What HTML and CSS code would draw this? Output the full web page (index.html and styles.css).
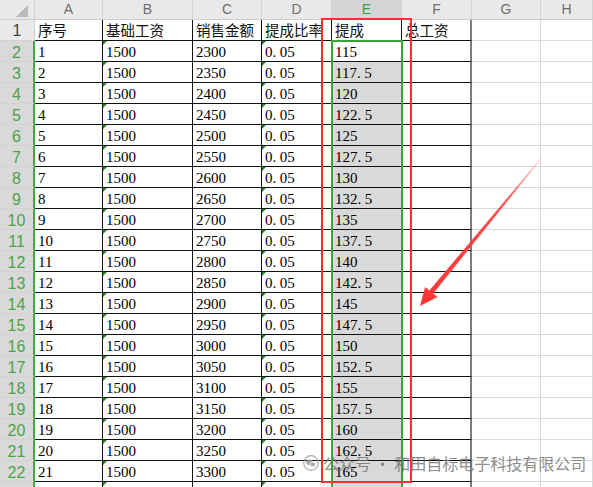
FILE: index.html
```html
<!DOCTYPE html>
<html lang="zh">
<head>
<meta charset="utf-8">
<title>提成表</title>
<link rel="stylesheet" href="styles.css">
</head>
<body>
<div class="wrap">
  <div class="sheet">
    <div class="corner"><span class="tri"></span></div>
    <div class="ch">A</div><div class="ch">B</div><div class="ch">C</div><div class="ch">D</div><div class="ch sel">E</div><div class="ch">F</div><div class="ch">G</div><div class="ch">H</div>

    <div class="rh">1</div><div class="c hd">序号</div><div class="c hd">基础工资</div><div class="c hd">销售金额</div><div class="c hd">提成比率</div><div class="c hd">提成</div><div class="c hd f">总工资</div><div class="g"></div><div class="g"></div>

    <div class="rh sel">2</div><div class="c">1</div><div class="c t">1500</div><div class="c">2300</div><div class="c t">0<span class="p">.</span>05</div><div class="c e act">115</div><div class="c f"></div><div class="g"></div><div class="g"></div>
    <div class="rh sel">3</div><div class="c">2</div><div class="c t">1500</div><div class="c">2350</div><div class="c t">0<span class="p">.</span>05</div><div class="c e">117<span class="p">.</span>5</div><div class="c f"></div><div class="g"></div><div class="g"></div>
    <div class="rh sel">4</div><div class="c">3</div><div class="c t">1500</div><div class="c">2400</div><div class="c t">0<span class="p">.</span>05</div><div class="c e">120</div><div class="c f"></div><div class="g"></div><div class="g"></div>
    <div class="rh sel">5</div><div class="c">4</div><div class="c t">1500</div><div class="c">2450</div><div class="c t">0<span class="p">.</span>05</div><div class="c e">122<span class="p">.</span>5</div><div class="c f"></div><div class="g"></div><div class="g"></div>
    <div class="rh sel">6</div><div class="c">5</div><div class="c t">1500</div><div class="c">2500</div><div class="c t">0<span class="p">.</span>05</div><div class="c e">125</div><div class="c f"></div><div class="g"></div><div class="g"></div>
    <div class="rh sel">7</div><div class="c">6</div><div class="c t">1500</div><div class="c">2550</div><div class="c t">0<span class="p">.</span>05</div><div class="c e">127<span class="p">.</span>5</div><div class="c f"></div><div class="g"></div><div class="g"></div>
    <div class="rh sel">8</div><div class="c">7</div><div class="c t">1500</div><div class="c">2600</div><div class="c t">0<span class="p">.</span>05</div><div class="c e">130</div><div class="c f"></div><div class="g"></div><div class="g"></div>
    <div class="rh sel">9</div><div class="c">8</div><div class="c t">1500</div><div class="c">2650</div><div class="c t">0<span class="p">.</span>05</div><div class="c e">132<span class="p">.</span>5</div><div class="c f"></div><div class="g"></div><div class="g"></div>
    <div class="rh sel">10</div><div class="c">9</div><div class="c t">1500</div><div class="c">2700</div><div class="c t">0<span class="p">.</span>05</div><div class="c e">135</div><div class="c f"></div><div class="g"></div><div class="g"></div>
    <div class="rh sel">11</div><div class="c">10</div><div class="c t">1500</div><div class="c">2750</div><div class="c t">0<span class="p">.</span>05</div><div class="c e">137<span class="p">.</span>5</div><div class="c f"></div><div class="g"></div><div class="g"></div>
    <div class="rh sel">12</div><div class="c">11</div><div class="c t">1500</div><div class="c">2800</div><div class="c t">0<span class="p">.</span>05</div><div class="c e">140</div><div class="c f"></div><div class="g"></div><div class="g"></div>
    <div class="rh sel">13</div><div class="c">12</div><div class="c t">1500</div><div class="c">2850</div><div class="c t">0<span class="p">.</span>05</div><div class="c e">142<span class="p">.</span>5</div><div class="c f"></div><div class="g"></div><div class="g"></div>
    <div class="rh sel">14</div><div class="c">13</div><div class="c t">1500</div><div class="c">2900</div><div class="c t">0<span class="p">.</span>05</div><div class="c e">145</div><div class="c f"></div><div class="g"></div><div class="g"></div>
    <div class="rh sel">15</div><div class="c">14</div><div class="c t">1500</div><div class="c">2950</div><div class="c t">0<span class="p">.</span>05</div><div class="c e">147<span class="p">.</span>5</div><div class="c f"></div><div class="g"></div><div class="g"></div>
    <div class="rh sel">16</div><div class="c">15</div><div class="c t">1500</div><div class="c">3000</div><div class="c t">0<span class="p">.</span>05</div><div class="c e">150</div><div class="c f"></div><div class="g"></div><div class="g"></div>
    <div class="rh sel">17</div><div class="c">16</div><div class="c t">1500</div><div class="c">3050</div><div class="c t">0<span class="p">.</span>05</div><div class="c e">152<span class="p">.</span>5</div><div class="c f"></div><div class="g"></div><div class="g"></div>
    <div class="rh sel">18</div><div class="c">17</div><div class="c t">1500</div><div class="c">3100</div><div class="c t">0<span class="p">.</span>05</div><div class="c e">155</div><div class="c f"></div><div class="g"></div><div class="g"></div>
    <div class="rh sel">19</div><div class="c">18</div><div class="c t">1500</div><div class="c">3150</div><div class="c t">0<span class="p">.</span>05</div><div class="c e">157<span class="p">.</span>5</div><div class="c f"></div><div class="g"></div><div class="g"></div>
    <div class="rh sel">20</div><div class="c">19</div><div class="c t">1500</div><div class="c">3200</div><div class="c t">0<span class="p">.</span>05</div><div class="c e">160</div><div class="c f"></div><div class="g"></div><div class="g"></div>
    <div class="rh sel">21</div><div class="c">20</div><div class="c t">1500</div><div class="c">3250</div><div class="c t">0<span class="p">.</span>05</div><div class="c e">162<span class="p">.</span>5</div><div class="c f"></div><div class="g"></div><div class="g"></div>
    <div class="rh sel">22</div><div class="c">21</div><div class="c t">1500</div><div class="c">3300</div><div class="c t">0<span class="p">.</span>05</div><div class="c e">165</div><div class="c f"></div><div class="g"></div><div class="g"></div>
    <div class="rh sel"></div><div class="c"></div><div class="c t"></div><div class="c"></div><div class="c t"></div><div class="c e"></div><div class="c f"></div><div class="g"></div><div class="g"></div>
  </div>

  <div class="selbox"></div>
  <div class="redbox"></div>

  <svg class="arrow" width="593" height="487" viewBox="0 0 593 487">
    <defs>
      <linearGradient id="ag" x1="541" y1="158" x2="420" y2="306" gradientUnits="userSpaceOnUse">
        <stop offset="0" stop-color="#ff4a4a" stop-opacity="0.25"/>
        <stop offset="0.3" stop-color="#ff3c3c" stop-opacity="0.9"/>
        <stop offset="1" stop-color="#ff3333"/>
      </linearGradient>
    </defs>
    <polygon fill="url(#ag)" points="541.8,158.3 433.2,293.6 437.5,297.1 420,306 425.1,287.0 429.4,290.4 541.2,157.7"/>
  </svg>

  <div class="mark">
    <svg class="mark-icon" width="16" height="16" viewBox="0 0 16 16">
      <circle cx="8" cy="8" r="7.3" fill="none" stroke="#9a9a9a" stroke-width="1.2"/>
      <ellipse cx="6.6" cy="7.2" rx="3.4" ry="2.8" fill="#9a9a9a"/>
      <ellipse cx="9.8" cy="9.4" rx="2.8" ry="2.3" fill="#9a9a9a" stroke="#fff" stroke-width="0.8"/>
    </svg>
    <span class="mark-text">公众号 · 和田自标电子科技有限公司</span>
  </div>
</div>
</body>
</html>
```

FILE: styles.css
```css
html, body {
  margin: 0;
  padding: 0;
  width: 593px;
  height: 487px;
  overflow: hidden;
  background: #ffffff;
}

.wrap {
  position: relative;
  width: 593px;
  height: 487px;
  overflow: hidden;
}

.sheet {
  display: grid;
  grid-template-columns: 35px 68px 90px 69px 70px 70px 70px 69px 52px;
  grid-template-rows: 20px repeat(23, 21px);
  font-family: "Liberation Serif", "Noto Sans CJK SC", serif;
  font-size: 15px;
  color: #000;
}

.sheet > div {
  box-sizing: border-box;
  overflow: hidden;
  white-space: nowrap;
}

/* top-left select-all corner */
.corner {
  position: relative;
  background: #e9e9e9;
  border-right: 1px solid #d2d2d2;
  border-bottom: 1px solid #cdcdcd;
}
.tri {
  position: absolute;
  right: 6px;
  bottom: 2px;
  width: 0;
  height: 0;
  border-left: 12px solid transparent;
  border-bottom: 12px solid #b9b9b9;
}

/* column headers */
.ch {
  background: #e9e9e9;
  border-right: 1px solid #d2d2d2;
  border-bottom: 1px solid #cdcdcd;
  font-family: "Liberation Sans", sans-serif;
  font-size: 14px;
  line-height: 19px;
  color: #6e6e6e;
  text-align: center;
}
.ch.sel {
  background: #d5d5d5;
  color: #3f9e3f;
}

/* row headers */
.rh {
  background: #e9e9e9;
  border-right: 1px solid #d2d2d2;
  border-bottom: 1px solid #d2d2d2;
  font-family: "Liberation Sans", sans-serif;
  font-size: 16px;
  line-height: 19px;
  padding-top: 1px;
  color: #444;
  text-align: center;
}
.rh.sel {
  background: #d9d9d9;
  color: #4ba34b;
  border-right: 2px solid #45a845;
  padding-top: 2px;
}

/* table cells */
.c {
  position: relative;
  border-right: 1px solid #111;
  border-bottom: 1px solid #111;
  padding: 3px 0 0 3px;
  line-height: 17px;
}
.c.hd {
  font-family: "Noto Sans CJK SC", sans-serif;
  font-size: 14.5px;
  line-height: 20px;
  padding-top: 0;
  color: #111;
}
.c.f {
  border-right: 2px solid #7d7d7d;
}
.c.e {
  background: #d9d9d9;
}
.c.act {
  background: #ffffff;
}
.c.t::before {
  content: "";
  position: absolute;
  left: 0;
  top: 0;
  width: 0;
  height: 0;
  border-top: 4px solid #1f8a1f;
  border-right: 4px solid transparent;
}
.p {
  margin-right: 3.5px;
}

/* empty grid cells */
.g {
  border-right: 1px solid #dadada;
  border-bottom: 1px solid #dadada;
}

/* overlays */
.selbox {
  position: absolute;
  left: 331px;
  top: 40px;
  width: 72px;
  height: 460px;
  box-sizing: border-box;
  border: 2px solid #3aa33a;
  border-bottom: none;
}
.redbox {
  position: absolute;
  left: 321px;
  top: 18px;
  width: 91px;
  height: 465px;
  box-sizing: border-box;
  border: 2px solid #ff3030;
}
.arrow {
  position: absolute;
  left: 0;
  top: 0;
}

.mark {
  position: absolute;
  left: 303px;
  top: 453px;
  display: flex;
  align-items: center;
  gap: 4px;
}
.mark-icon {
  display: block;
  opacity: 0.85;
}
.mark-text {
  font-family: "Noto Sans CJK SC", sans-serif;
  font-size: 16px;
  line-height: 20px;
  color: rgba(110, 110, 110, 0.8);
}
```
